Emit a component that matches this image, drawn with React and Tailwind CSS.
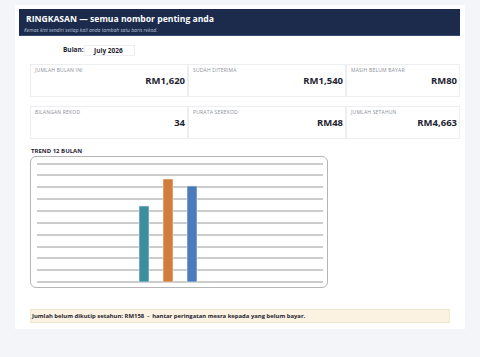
const stats = [
  [
    { label: "JUMLAH BULAN INI", value: "RM1,620" },
    { label: "SUDAH DITERIMA", value: "RM1,540" },
    { label: "MASIH BELUM BAYAR", value: "RM80" },
  ],
  [
    { label: "BILANGAN REKOD", value: "34" },
    { label: "PURATA SEREKOD", value: "RM48" },
    { label: "JUMLAH SETAHUN", value: "RM4,663" },
  ],
];

const gridY = [7, 18, 30, 42, 54, 66, 78, 90, 101, 113, 125];

const bars = [
  { x: 108, top: 49, color: "#3b8e9e" },
  { x: 132, top: 22, color: "#d27d3c" },
  { x: 156, top: 29, color: "#4b7bb9" },
];

function StatRow({ items }) {
  return (
    <div className="grid grid-cols-[158px_158px_114px] h-[33px]">
      {items.map((s) => (
        <div key={s.label} className="border border-[#eceef1] pl-[4px] pr-[2px] pt-[2px] flex flex-col">
          <div className="text-[5px] leading-[7px] text-[#8b9099] tracking-[0.2px]">{s.label}</div>
          <div className="text-right text-[9.5px] leading-[12px] font-bold text-[#1f2433] mt-[1px]">{s.value}</div>
        </div>
      ))}
    </div>
  );
}

export default function App() {
  return (
    <div className="min-h-[357px] w-[480px] bg-[#f3f5f9] pt-[5px] pl-[15px]" style={{ fontFamily: '"Open Sans", "Noto Sans", sans-serif' }}>
      <div className="w-[450px] h-[324px] bg-white pt-[4px] pl-[4px] flex flex-col">
        {/* Header */}
        <div className="w-[441px] h-[27px] bg-[#1c2a4b] border-b border-[#3a4a6e] pl-[7px] flex flex-col">
          <div className="text-[8.6px] leading-[12px] font-bold text-white mt-[4px]">
            RINGKASAN — semua nombor penting anda
          </div>
          <div className="text-[5px] leading-[7px] italic text-[#b9c3da] mt-[2px] -ml-[2px]">
            Kemas kini sendiri setiap kali anda tambah satu baris rekod.
          </div>
        </div>

        {/* Bulan */}
        <div className="flex items-center h-[10px] mt-[9px] ml-[44px]">
          <span className="text-[6.5px] font-bold text-[#1f2433] w-[21px] whitespace-nowrap">Bulan:</span>
          <div className="w-[51px] h-[11px] border border-[#eceef1] pl-[9px] text-[6.5px] leading-[9px] font-bold text-[#1f2433]">
            July 2026
          </div>
        </div>

        {/* Stats */}
        <div className="ml-[11px] mt-[9px] flex flex-col gap-[9px]">
          <StatRow items={stats[0]} />
          <StatRow items={stats[1]} />
        </div>

        {/* Chart */}
        <div className="ml-[12px] mt-[9px] text-[6px] leading-[7px] font-bold text-[#1f2433]">TREND 12 BULAN</div>
        <div className="ml-[11px] mt-[1px] w-[298px] h-[132px] border border-[#b5b5b5] rounded-[6px] overflow-hidden">
          <svg width="298" height="132" viewBox="0 0 298 132">
            {gridY.map((y) => (
              <line key={y} x1="6" x2="292" y1={y} y2={y} stroke="#9a9a9a" strokeWidth="1.2" />
            ))}
            {bars.map((b) => (
              <rect key={b.x} x={b.x} y={b.top} width="10" height={125 - b.top} fill={b.color} stroke="#e8eef2" strokeWidth="0.6" />
            ))}
          </svg>
        </div>

        {/* Note */}
        <div className="ml-[11px] mt-[21px] w-[420px] h-[14px] bg-[#fbf2e1] border border-[#f1e6d0] pl-[1px] flex items-center text-[5.9px] font-bold text-[#1f2433]">
          Jumlah belum dikutip setahun: RM158&nbsp; - &nbsp;hantar peringatan mesra kepada yang belum bayar.
        </div>
      </div>
    </div>
  );
}
